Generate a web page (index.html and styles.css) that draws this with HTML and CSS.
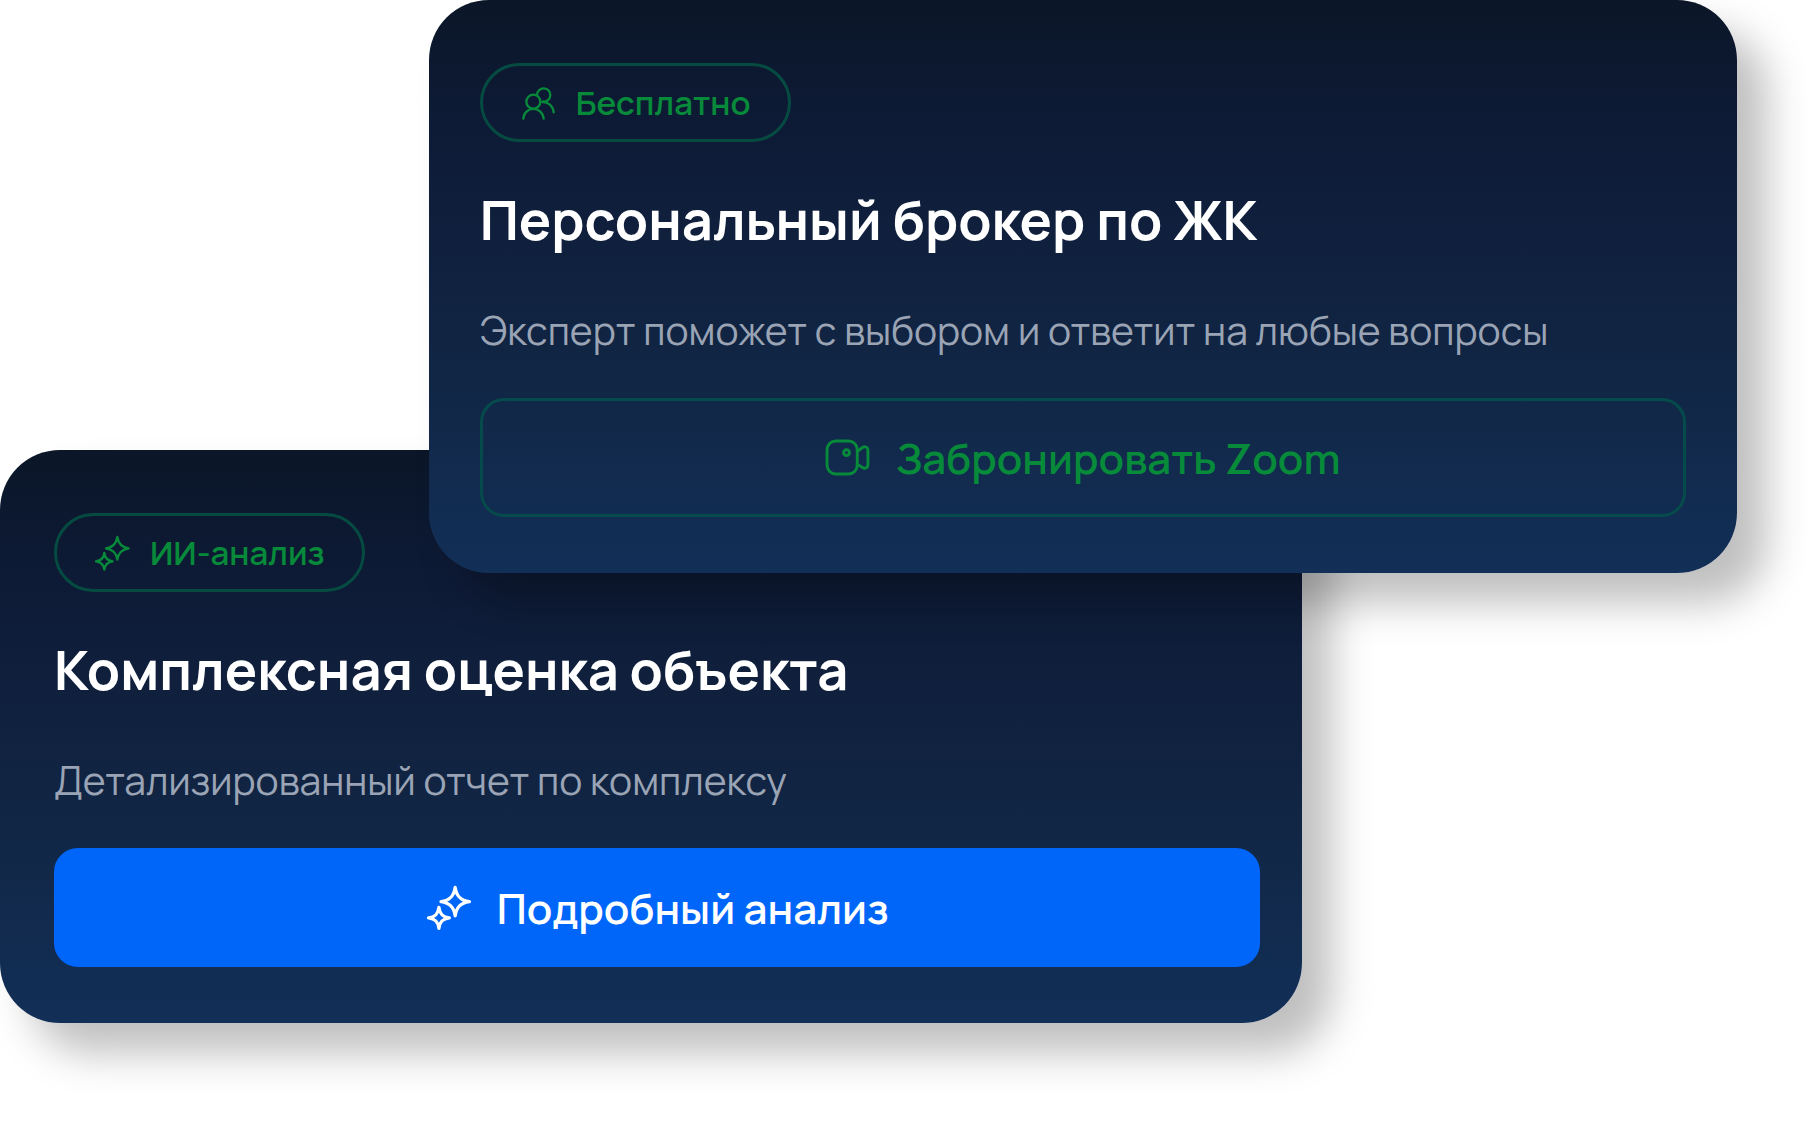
FILE: index.html
```html
<!DOCTYPE html>
<html lang="ru">
<head>
    <meta charset="UTF-8">
    <meta name="viewport" content="width=device-width, initial-scale=1.0">
    <title>Персональный брокер по ЖК</title>
    <link rel="stylesheet" href="styles.css">
</head>
<body>
    <svg class="sprite" aria-hidden="true">
        <symbol id="icon-sparkles" viewBox="0 0 108 108">
            <path d="M70 6 C73 27 83 37 104 40 C83 43 73 53 70 74 C67 53 57 43 36 40 C57 37 67 27 70 6 Z"/>
            <path d="M31 54 C33 70 40 77 56 79 C40 81 33 88 31 104 C29 88 22 81 6 79 C22 77 29 70 31 54 Z"/>
        </symbol>
        <symbol id="icon-users" viewBox="0 0 108 108">
            <circle cx="40" cy="50" r="21"/>
            <path d="M10 101 C13 62 67 62 71 101"/>
            <path d="M51 30 A20 20 0 1 1 69 50"/>
            <path d="M67 51 C84 50 99 63 101 82"/>
        </symbol>
        <symbol id="icon-camera" viewBox="0 0 46 38">
            <rect x="2" y="2" width="31" height="34" rx="9"/>
            <circle cx="22" cy="14" r="3"/>
            <path d="M33 13 L38 9 C41 7 44 8 44 12 V26 C44 30 41 31 38 29 L33 26"/>
        </symbol>
    </svg>

    <main class="cards">
        <section class="card card-broker">
            <div class="badge">
                <svg class="badge-icon" aria-hidden="true"><use href="#icon-users"/></svg>
                Бесплатно
            </div>
            <h2 class="title">Персональный брокер по ЖК</h2>
            <p class="text">Эксперт поможет с выбором и ответит на любые вопросы</p>
            <button type="button" class="btn btn-outline">
                <svg class="btn-icon camera" aria-hidden="true"><use href="#icon-camera"/></svg>
                Забронировать Zoom
            </button>
        </section>

        <section class="card card-analysis">
            <div class="badge">
                <svg class="badge-icon" aria-hidden="true"><use href="#icon-sparkles"/></svg>
                ИИ-анализ
            </div>
            <h2 class="title">Комплексная оценка объекта</h2>
            <p class="text">Детализированный отчет по комплексу</p>
            <button type="button" class="btn btn-primary">
                <svg class="btn-icon" aria-hidden="true"><use href="#icon-sparkles"/></svg>
                Подробный анализ
            </button>
        </section>
    </main>
</body>
</html>
```

FILE: styles.css
```css
* {
    margin: 0;
    padding: 0;
    box-sizing: border-box;
}

body {
    min-height: 100vh;
    background-color: #fff;
    font-family: Manrope, Inter, sans-serif;
}

.sprite {
    display: none;
}

.cards {
    display: flex;
    flex-direction: column;
    padding-bottom: 80px;
}

.card {
    display: flex;
    flex-direction: column;
    align-items: flex-start;
    padding: 63px 51px 56px;
    border-radius: 60px;
    background: linear-gradient(#0b1628 0%, #0e1b37 24%, #112645 66%, #122f57 100%);
    box-shadow: 30px 30px 40px rgba(0, 0, 0, 0.25);
}

.card-broker {
    position: relative;
    z-index: 1;
    width: 72.3%;
    margin-left: 23.7%;
}

/* lies partly under the first card */
.card-analysis {
    width: 72%;
    margin-top: -123px;
    padding-right: 42px;
    padding-left: 54px;
}

.badge {
    display: flex;
    align-items: center;
    gap: 20px;
    height: 79px;
    padding: 0 37px;
    border: 3px solid #064b41;
    border-radius: 40px;
    color: #078a3a;
    font-size: 33px;
    font-weight: 600;
    line-height: 44px;
}

.badge-icon {
    width: 36px;
    height: 36px;
    fill: none;
    stroke: currentColor;
    stroke-width: 7;
    stroke-linecap: round;
    stroke-linejoin: round;
}

.title {
    margin-top: 41px;
    color: #fff;
    font-size: 54px;
    font-weight: 700;
    line-height: 72px;
}

.text {
    margin-top: 49px;
    color: #9aa4b5;
    font-size: 39px;
    font-weight: 400;
    line-height: 52px;
}

.btn {
    display: flex;
    align-items: center;
    justify-content: center;
    gap: 26px;
    width: 100%;
    height: 119px;
    margin-top: 42px;
    border: 3px solid transparent;
    border-radius: 24px;
    font-family: inherit;
    font-size: 42px;
    font-weight: 600;
    cursor: pointer;
}

.btn-outline {
    background: transparent;
    border-color: #064b4b;
    color: #078a3a;
}

.btn-primary {
    background-color: #0066fa;
    border-color: #0066fa;
    color: #fff;
}

.btn-icon {
    width: 45px;
    height: 45px;
    fill: none;
    stroke: currentColor;
    stroke-width: 8;
    stroke-linecap: round;
    stroke-linejoin: round;
}

.camera {
    height: 37px;
    stroke-width: 3;
}
```
